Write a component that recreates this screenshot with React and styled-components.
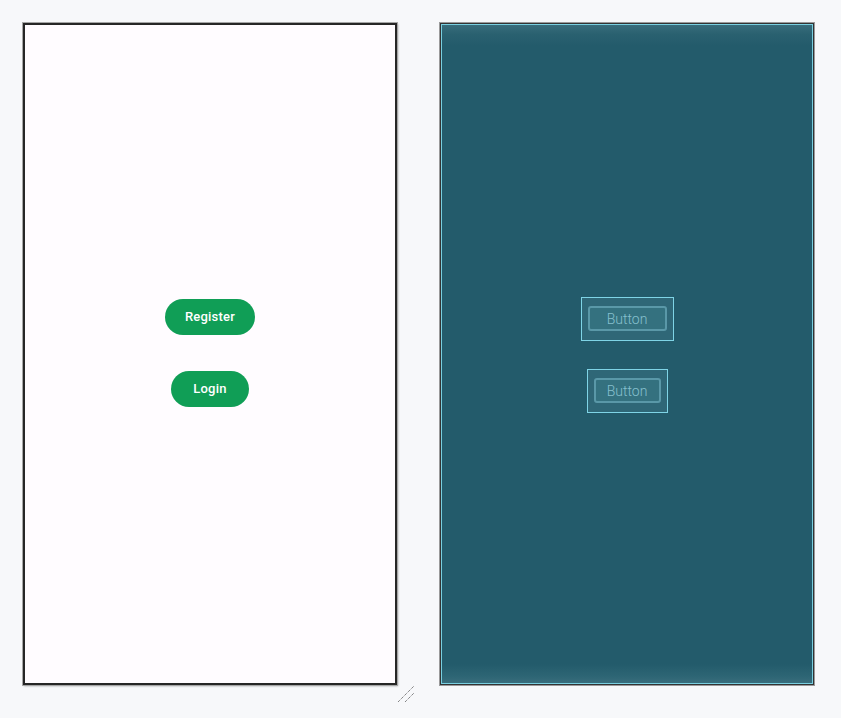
import React from "react";
import styled, { createGlobalStyle } from "styled-components";

const Global = createGlobalStyle`
  html, body {
    margin: 0;
    padding: 0;
    background: #f7f8fa;
    font-family: Roboto, "Liberation Sans", sans-serif;
  }
`;

const Canvas = styled.div`
  display: flex;
  flex-direction: row;
  gap: 43px;
  padding: 23px 0 0 23px;
  height: 718px;
  box-sizing: border-box;
`;

const Frame = styled.div`
  position: relative;
  width: 374px;
  height: 662px;
  box-sizing: border-box;
  display: flex;
  flex-direction: column;
  align-items: center;
  justify-content: center;
`;

const DesignFrame = styled(Frame)`
  background: #fffcff;
  border: 2px solid #262626;
  box-shadow: 0 0 0 1px #a6a6a6, 1px 1px 2px rgba(0, 0, 0, 0.35);
  gap: 36px;
  padding-bottom: 3px;
`;

const BlueprintFrame = styled(Frame)`
  background: linear-gradient(
    to bottom,
    #3a6e7d 0px,
    #2a6170 10px,
    #235b6b 22px,
    #235b6b calc(100% - 20px),
    #2d6574 calc(100% - 8px),
    #3a6e7d 100%
  );
  border: 1px solid #333;
  box-shadow: 0 0 0 1px #9a9a9a, inset 0 0 0 1px #78cfe0;
  gap: 28px;
  padding-top: 2px;
`;

const PillButton = styled.button`
  height: 36px;
  padding: 0 ${(p) => p.$pad}px;
  border: none;
  border-radius: 18px;
  background: #109e56;
  color: #fff;
  font-family: Roboto, "Liberation Sans", sans-serif;
  font-weight: 500;
  font-size: 13px;
  letter-spacing: 0.2px;
`;

const BlueBox = styled.div`
  width: ${(p) => p.$w}px;
  height: 44px;
  box-sizing: border-box;
  padding: 8px 6px 9px;
  border: 1px solid #7fd4e6;
  background: #2f6777;
  display: flex;
`;

const BlueInner = styled.div`
  flex: 1;
  border: 2px solid #5a98a8;
  border-radius: 3px;
  background: #34717f;
  display: flex;
  align-items: center;
  justify-content: center;
  color: #86c0ce;
  font-family: Roboto, "Liberation Sans", sans-serif;
  font-weight: 300;
  font-size: 14px;
`;

const Handle = styled.svg`
  position: absolute;
  right: -20px;
  bottom: -20px;
`;

export default function App() {
  return (
    <>
      <Global />
      <Canvas>
        <DesignFrame>
          <PillButton $pad={20}>Register</PillButton>
          <PillButton $pad={22}>Login</PillButton>
          <Handle width="18" height="18" viewBox="0 0 18 18">
            <line x1="1" y1="17" x2="17" y2="1" stroke="#555" strokeWidth="1" strokeDasharray="1 1" />
            <line x1="8" y1="17" x2="17" y2="8" stroke="#555" strokeWidth="1" strokeDasharray="1 1" />
          </Handle>
        </DesignFrame>
        <BlueprintFrame>
          <BlueBox $w={93}>
            <BlueInner>Button</BlueInner>
          </BlueBox>
          <BlueBox $w={81}>
            <BlueInner>Button</BlueInner>
          </BlueBox>
        </BlueprintFrame>
      </Canvas>
    </>
  );
}
